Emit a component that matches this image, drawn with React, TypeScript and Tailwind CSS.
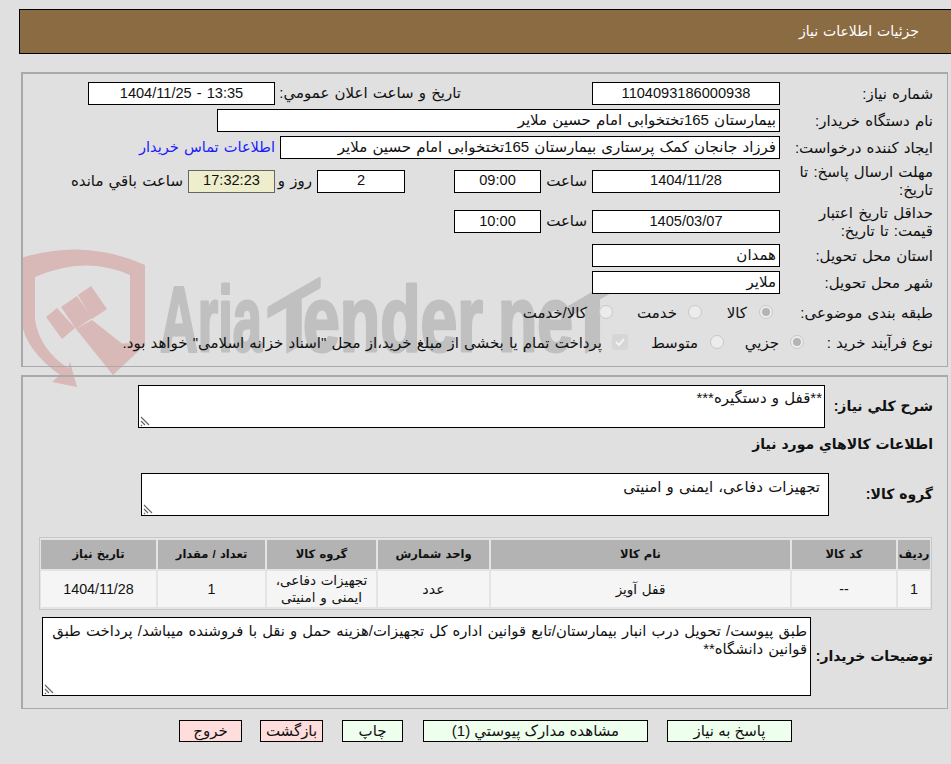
import React from 'react';

const font = "font-['Liberation_Sans','DejaVu_Sans',sans-serif]";
const field = 'flex h-[23px] shrink-0 items-center border border-black bg-white px-[3px] whitespace-nowrap';

function Field({ width, center, children }: { width: string; center?: boolean; children: React.ReactNode }) {
  return <div className={`${field} ${width} ${center ? 'justify-center text-[14.6px]' : 'text-[15px]'}`}>{children}</div>;
}

function Row({ label, height, children }: { label: string; height: string; children: React.ReactNode }) {
  return (
    <div className={`flex items-center ${height}`}>
      <div className="w-[153px] shrink-0 pl-[8px] text-[15px] leading-[18px]">{label}</div>
      {children}
    </div>
  );
}

function Radio({ checked }: { checked?: boolean }) {
  return (
    <span className="-mt-[3px] flex size-[14px] shrink-0 items-center justify-center rounded-full border border-[#c8c8c8] bg-[#ececec]">
      {checked && <span className="size-[8px] rounded-full bg-[#b4b4b4]" />}
    </span>
  );
}

function Grip() {
  return (
    <svg className="absolute bottom-0 left-0 size-[12px]" viewBox="0 0 12 12">
      <path d="M2 2 L10 10 M2 6 L6 10 M2 10 L3 11" stroke="#666" strokeWidth="1.2" fill="none" />
    </svg>
  );
}

function Watermark() {
  return (
    <svg className="absolute left-0 top-0 [direction:ltr]" width="951" height="400" viewBox="0 0 951 400">
      {/* shield */}
      <path d="M21 258 Q85 238 145 265 L145 345 L113 375 L92 346 L130 343 L130 275 Q85 255 35 277 L35 320 Q40 350 68 368 L70 362 L77 387 L52 382 L60 375 Q25 350 21 320 Z" fill="#d9b8b8" />
      {/* hammer */}
      <path d="M46 317 L57 308 L75 328 L62 339 Z M61 307 L77 296 L92 318 L76 329 Z M78 295 L91 286 L107 309 L92 319 Z" fill="#d9b8b8" />
      <path d="M76 329 L92 320 L130 350 L113 375 Z" fill="#d9b8b8" />
      {/* wordmark */}
      <g fontFamily="Liberation Sans" fontWeight="700" fill="#c0c0c0" stroke="#c0c0c0" strokeWidth="3" strokeLinejoin="round">
        <text x="160" y="351" textLength="102" lengthAdjust="spacingAndGlyphs" fontSize="92">Aria</text>
        <text transform="translate(268 363) skewY(-30)" textLength="52" lengthAdjust="spacingAndGlyphs" fontSize="80">T</text>
        <text x="303" y="351" textLength="180" lengthAdjust="spacingAndGlyphs" fontSize="92">ender</text>
        <text x="498" y="351" textLength="75" lengthAdjust="spacingAndGlyphs" fontSize="92">ne</text>
        <text transform="translate(567 363) skewY(-30)" textLength="51" lengthAdjust="spacingAndGlyphs" fontSize="80">T</text>
      </g>
    </svg>
  );
}

const columns = [
  { title: 'ردیف', value: '1', width: 'w-[32px]', size: 'text-[14.3px]' },
  { title: 'کد کالا', value: '--', width: 'w-[104px]', size: 'text-[14.3px]' },
  { title: 'نام کالا', value: 'قفل آویز', width: 'w-[299px]', size: 'text-[13.5px]' },
  { title: 'واحد شمارش', value: 'عدد', width: 'w-[111px]', size: 'text-[14.3px]' },
  { title: 'گروه کالا', value: 'تجهیزات دفاعی، ایمنی و امنیتی', width: 'w-[109px]', size: 'text-[13.5px]' },
  { title: 'تعداد / مقدار', value: '1', width: 'w-[107px]', size: 'text-[14.3px]' },
  { title: 'تاریخ نیاز', value: '1404/11/28', width: 'w-[115px]', size: 'text-[14.3px]' },
];

const buttons = [
  { text: 'پاسخ به نیاز', width: 'w-[125px]', color: 'bg-[#eeffee]', gap: 'ml-[19px]' },
  { text: 'مشاهده مدارک پیوستي (1)', width: 'w-[225px]', color: 'bg-[#eeffee]', gap: 'ml-[20px]' },
  { text: 'چاپ', width: 'w-[61px]', color: 'bg-[#eeffee]', gap: 'ml-[19px]' },
  { text: 'بازگشت', width: 'w-[63px]', color: 'bg-[#ffdddd]', gap: 'ml-[18px]' },
  { text: 'خروج', width: 'w-[63px]', color: 'bg-[#ffdddd]', gap: '' },
];

export default function App() {
  return (
    <div dir="rtl" className={`relative h-[764px] w-[951px] overflow-hidden bg-[#e0e0e0] text-[#111] [word-spacing:1px] ${font}`}>
      <Watermark />
      <div className="relative">
        <div className="pt-[9px]">
          <div className="ml-[19px] flex h-[45px] w-[932px] items-center border border-r-0 border-black bg-[#8b6b41] pb-[1px] pr-[32px] text-[14px] text-white">
            جزئیات اطلاعات نیاز
          </div>
        </div>

        <section className="ml-[21px] mr-[3px] mt-[18px] h-[295px] border-2 border-b-[1px] border-r-[1px] border-[#a9a9a9] pr-[14px] pt-[6px]">
          <div className="flex flex-col">
            <Row label="شماره نیاز:" height="h-[27px]">
              <Field width="w-[188px]" center>1104093186000938</Field>
              <div className="mr-[131px] w-[181px] whitespace-nowrap text-[15px]">تاریخ و ساعت اعلان عمومي:</div>
              <div dir="ltr" className="mr-[5px]"><Field width="w-[187px]" center>1404/11/25 - 13:35</Field></div>
            </Row>
            <Row label="نام دستگاه خریدار:" height="h-[27px]">
              <Field width="w-[563px]">بیمارستان 165تختخوابی امام حسین ملایر</Field>
            </Row>
            <Row label="ایجاد کننده درخواست:" height="h-[27px]">
              <Field width="w-[500px]">فرزاد جانجان کمک پرستاری بیمارستان 165تختخوابی امام حسین ملایر</Field>
              <span className="mr-[5px] whitespace-nowrap text-[14.6px] text-[#1a1aff]">اطلاعات تماس خریدار</span>
            </Row>
            <Row label="مهلت ارسال پاسخ: تا تاریخ:" height="h-[40px]">
              <Field width="w-[188px]" center>1404/11/28</Field>
              <span className="mx-[5px] w-[41px] whitespace-nowrap text-[15px]">ساعت</span>
              <Field width="w-[87px]" center>09:00</Field>
              <div className="mr-[49px]"><Field width="w-[88px]" center>2</Field></div>
              <span className="ml-[9px] mr-[5px] w-[28px] whitespace-nowrap text-[15px]">روز و</span>
              <div className="flex h-[23px] w-[87px] shrink-0 items-center justify-center border border-[#666] bg-[#eeeecc] text-[14.6px]">17:32:23</div>
              <span className="mr-[5px] whitespace-nowrap text-[15px]">ساعت باقي مانده</span>
            </Row>
            <Row label="حداقل تاریخ اعتبار قیمت: تا تاریخ:" height="h-[41px]">
              <Field width="w-[188px]" center>1405/03/07</Field>
              <span className="mx-[5px] w-[41px] whitespace-nowrap text-[15px]">ساعت</span>
              <Field width="w-[87px]" center>10:00</Field>
            </Row>
            <Row label="استان محل تحویل:" height="h-[27px]">
              <Field width="w-[188px]">همدان</Field>
            </Row>
            <Row label="شهر محل تحویل:" height="h-[27px]">
              <Field width="w-[188px]">ملایر</Field>
            </Row>
            <Row label="طبقه بندی موضوعی:" height="h-[34px]">
              <div className="flex items-center whitespace-nowrap text-[15px]">
                <span className="mr-[7px]"><Radio checked /></span>
                <span className="mr-[12px] w-[45px]">کالا</span>
                <Radio />
                <span className="mr-[11px] w-[64px]">خدمت</span>
                <Radio />
                <span className="mr-[12px]">کالا/خدمت</span>
              </div>
            </Row>
            <Row label="نوع فرآیند خرید :" height="h-[26px]">
              <div className="flex items-center whitespace-nowrap text-[15px]">
                <span className="mr-[-24px]"><Radio checked /></span>
                <span className="mr-[11px] w-[55px]">جزیي</span>
                <Radio />
                <span className="mr-[12px] w-[70px]">متوسط</span>
                <span className="-mt-[3px] flex size-[16px] items-center justify-center rounded-[2px] bg-[#d6d6d6]">
                  <svg className="size-[12px]" viewBox="0 0 12 12"><path d="M2 6 L5 9 L10 3" stroke="#f2f2f2" strokeWidth="2" fill="none" /></svg>
                </span>
                <span className="mr-[10px]">پرداخت تمام یا بخشی از مبلغ خرید،از محل "اسناد خزانه اسلامی" خواهد بود.</span>
              </div>
            </Row>
          </div>
        </section>

        <section className="ml-[21px] mr-[3px] mt-[8px] h-[334px] border-2 border-b-[1px] border-r-[1px] border-[#a9a9a9] pr-[14px] pt-[8px]">
          <div className="flex h-[43px]">
            <div className="flex w-[108px] items-center whitespace-nowrap text-[14px] font-bold">شرح کلي نیاز:</div>
            <div className="relative h-[43px] w-[687px] border border-black bg-white px-[2px] pt-[1px] text-[15px]">
              **قفل و دستگیره***
              <Grip />
            </div>
          </div>
          <div className="mt-[5px] h-[23px] whitespace-nowrap text-[14px] font-bold leading-[23px]">اطلاعات کالاهاي مورد نیاز</div>
          <div className="mt-[17px] flex h-[43px]">
            <div className="flex w-[104px] items-center whitespace-nowrap text-[14px] font-bold">گروه کالا:</div>
            <div className="relative h-[43px] w-[688px] border border-black bg-white px-[8px] pt-[2px] text-[15px]">
              تجهیزات دفاعی، ایمنی و امنیتی
              <Grip />
            </div>
          </div>
          <div className="mr-[1px] mt-[21px] flex h-[73px] w-[893px] flex-row gap-[2px] border border-[#c8c8c8] bg-[#e4e4e4] px-[1px] py-[2px]">
            {columns.map((col) => (
              <div key={col.title} className={`flex shrink-0 flex-col gap-[2px] ${col.width}`}>
                <div className="flex h-[29px] items-center justify-center whitespace-nowrap bg-[#b3b3b3] text-[11.5px] font-bold">{col.title}</div>
                <div className={`flex h-[36px] items-center justify-center bg-[#f5f5f5] text-center leading-[17px] ${col.size}`}>{col.value}</div>
              </div>
            ))}
          </div>
          <div className="mt-[7px] flex h-[79px]">
            <div className="flex w-[122px] items-center whitespace-nowrap text-[14px] font-bold">توضیحات خریدار:</div>
            <div className="relative h-[79px] w-[769px] border border-black bg-white pl-0 pr-[3px] pt-[4px] text-[14.8px] leading-[18px]">
              طبق پیوست/ تحویل درب انبار بیمارستان/تابع قوانین اداره کل تجهیزات/هزینه حمل و نقل با فروشنده میباشد/ پرداخت طبق قوانین دانشگاه**
              <Grip />
            </div>
          </div>
        </section>

        <div className="mr-[159px] mt-[11px] flex">
          {buttons.map((b) => (
            <button key={b.text} className={`h-[22px] border border-black text-[15px] leading-[20px] ${b.width} ${b.color} ${b.gap}`}>{b.text}</button>
          ))}
        </div>
      </div>
    </div>
  );
}
